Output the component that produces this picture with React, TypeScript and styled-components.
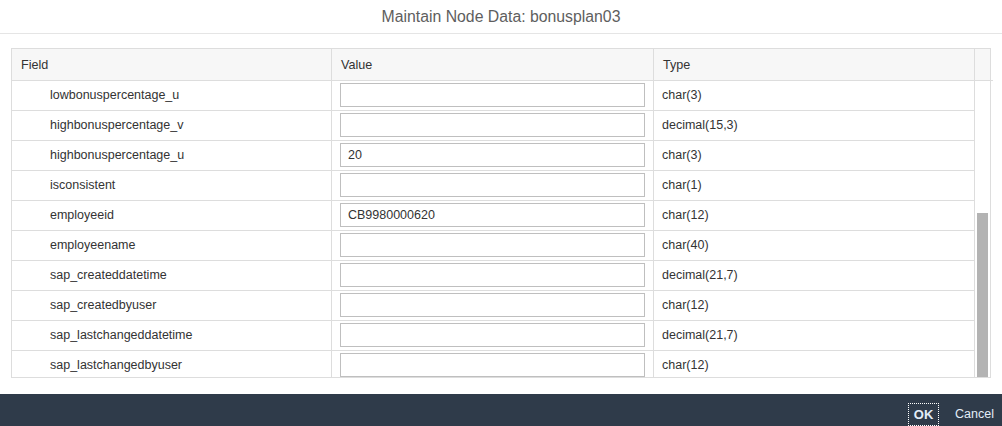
import React from "react";
import styled, { createGlobalStyle } from "styled-components";

const Global = createGlobalStyle`
  html, body { margin: 0; padding: 0; background: #ffffff; }
  body { font-family: "Liberation Sans", Arial, sans-serif; width: 1002px; height: 426px; overflow: hidden; }
  * { box-sizing: border-box; }
`;

const Dialog = styled.div`
  width: 1002px;
  height: 426px;
  display: flex;
  flex-direction: column;
  background: #fff;
`;

const TitleBar = styled.header`
  height: 34px;
  border-bottom: 1px solid #e5e5e5;
  display: flex;
  align-items: center;
  justify-content: center;
  font-size: 15.8px;
  color: #5e5e5e;
  padding-top: 1px;
`;

const Content = styled.div`
  flex: 1;
  padding: 14px 11px 0 11px;
`;

const Table = styled.div`
  width: 980px;
  border: 1px solid #dddddd;
`;

const HeaderRow = styled.div`
  display: grid;
  grid-template-columns: 320px 322px 321px 15px;
  background: #f7f7f7;
  height: 32px;
`;

const HeaderCell = styled.div`
  border-right: 1px solid #dddddd;
  border-bottom: 1px solid #dddddd;
  display: flex;
  align-items: center;
  padding: 0 9px;
  font-size: 12.6px;
  color: #333;
  &:last-child { border-right: none; }
`;

const BodyArea = styled.div`
  display: grid;
  grid-template-columns: 963px 15px;
  height: 296px;
  overflow: hidden;
`;

const Rows = styled.div`
  display: flex;
  flex-direction: column;
`;

const Row = styled.div`
  display: grid;
  grid-template-columns: 320px 322px 321px;
  height: 30px;
  flex-shrink: 0;
`;

const Cell = styled.div<{ $indent?: number }>`
  border-right: 1px solid #dddddd;
  border-bottom: 1px solid #dddddd;
  display: flex;
  align-items: center;
  padding: 0 8px 0 ${(p) => p.$indent ?? 8}px;
  font-size: 12.5px;
  color: #333;
  padding-bottom: 1px;
`;

const ValueInput = styled.input`
  width: 100%;
  height: 24px;
  border: 1px solid #bfbfbf;
  border-radius: 0;
  padding: 0 7px;
  font-family: "Liberation Sans", Arial, sans-serif;
  font-size: 12.5px;
  color: #333;
  background: #fff;
  outline: none;
`;

const ScrollTrack = styled.div`
  background: #fff;
  padding: 132px 2px 0 2px;
`;

const ScrollThumb = styled.div`
  height: 170px;
  background: #b3b3b3;
`;

const Footer = styled.footer`
  height: 32px;
  background: #2f3b4a;
  display: flex;
  align-items: center;
  justify-content: flex-end;
  gap: 15px;
  padding: 0 7px 0 0;
`;

const FooterButton = styled.button<{ $focused?: boolean }>`
  background: transparent;
  border: 1px dotted ${(p) => (p.$focused ? "#ffffff" : "transparent")};
  color: #e3edf8;
  font-family: "Liberation Sans", Arial, sans-serif;
  font-size: ${(p) => (p.$focused ? "13px" : "12.5px")};
  font-weight: ${(p) => (p.$focused ? 700 : 400)};
  height: 23px;
  width: ${(p) => (p.$focused ? "31px" : "auto")};
  padding: 0;
  margin-top: 8px;
  cursor: pointer;
`;

const rows: { field: string; value: string; type: string }[] = [
  { field: "lowbonuspercentage_u", value: "", type: "char(3)" },
  { field: "highbonuspercentage_v", value: "", type: "decimal(15,3)" },
  { field: "highbonuspercentage_u", value: "20", type: "char(3)" },
  { field: "isconsistent", value: "", type: "char(1)" },
  { field: "employeeid", value: "CB9980000620", type: "char(12)" },
  { field: "employeename", value: "", type: "char(40)" },
  { field: "sap_createddatetime", value: "", type: "decimal(21,7)" },
  { field: "sap_createdbyuser", value: "", type: "char(12)" },
  { field: "sap_lastchangeddatetime", value: "", type: "decimal(21,7)" },
  { field: "sap_lastchangedbyuser", value: "", type: "char(12)" },
];

export default function App() {
  return (
    <>
      <Global />
      <Dialog>
        <TitleBar>Maintain Node Data: bonusplan03</TitleBar>
        <Content>
          <Table>
            <HeaderRow>
              <HeaderCell>Field</HeaderCell>
              <HeaderCell>Value</HeaderCell>
              <HeaderCell>Type</HeaderCell>
              <HeaderCell />
            </HeaderRow>
            <BodyArea>
              <Rows>
                {rows.map((r) => (
                  <Row key={r.field}>
                    <Cell $indent={38}>{r.field}</Cell>
                    <Cell>
                      <ValueInput readOnly value={r.value} />
                    </Cell>
                    <Cell>{r.type}</Cell>
                  </Row>
                ))}
              </Rows>
              <ScrollTrack>
                <ScrollThumb />
              </ScrollTrack>
            </BodyArea>
          </Table>
        </Content>
        <Footer>
          <FooterButton $focused>OK</FooterButton>
          <FooterButton>Cancel</FooterButton>
        </Footer>
      </Dialog>
    </>
  );
}
